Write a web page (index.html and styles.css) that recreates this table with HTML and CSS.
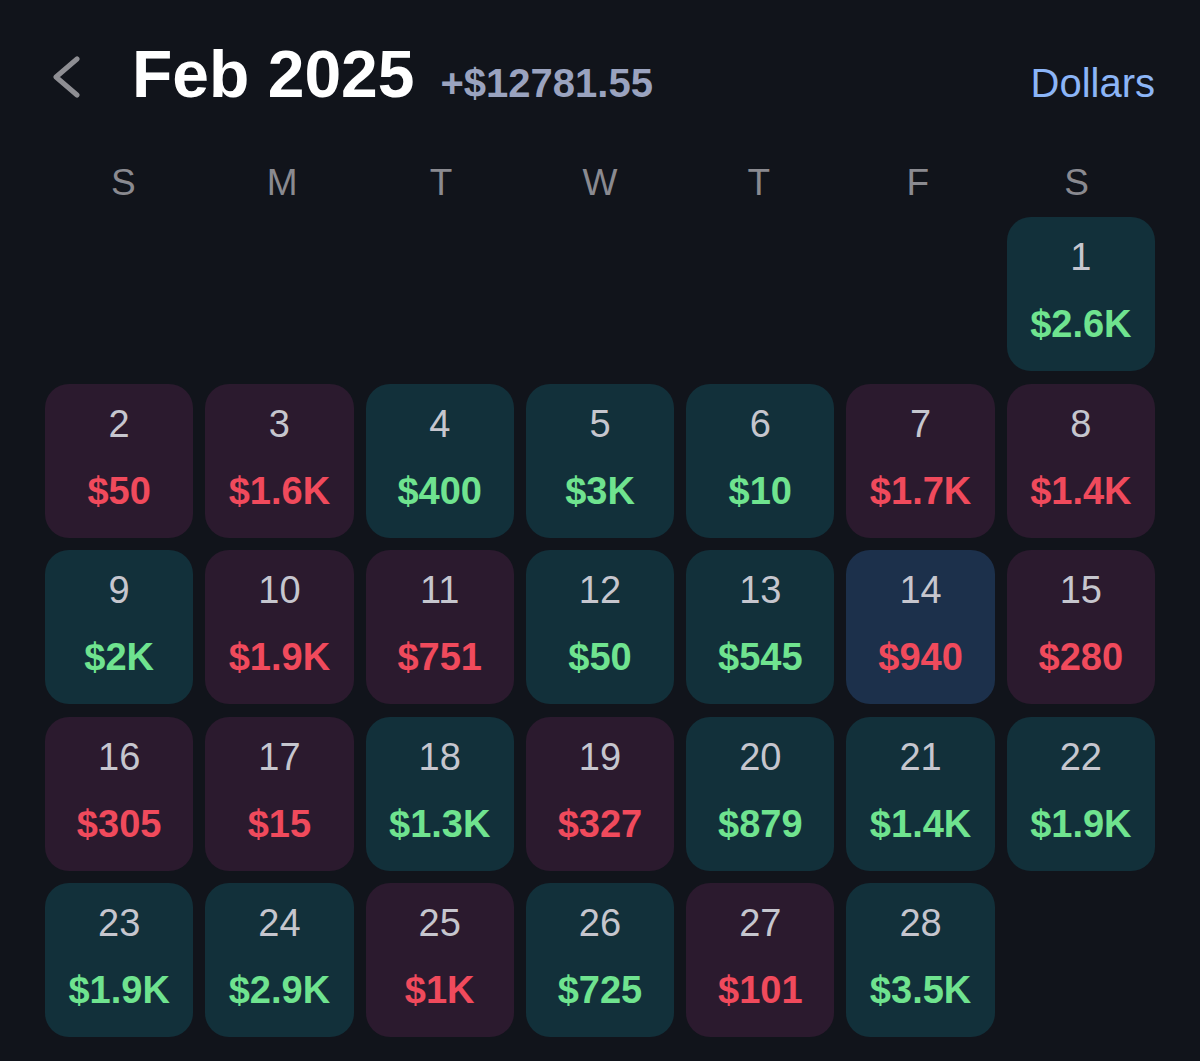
FILE: index.html
```html
<!DOCTYPE html>
<html lang="en">
<head>
<meta charset="utf-8">
<title>Feb 2025</title>
<link rel="stylesheet" href="styles.css">
</head>
<body>
<div class="screen">
  <header class="header">
    <svg class="back" width="32" height="42" viewBox="0 0 32 42" aria-hidden="true">
      <polyline points="26,3 5,21 26,39" fill="none" stroke="#8e8e93" stroke-width="5" stroke-linecap="round" stroke-linejoin="round"/>
    </svg>
    <h1 class="title">Feb 2025</h1>
    <span class="total">+$12781.55</span>
    <span class="unit">Dollars</span>
  </header>

  <div class="weekdays">
    <span>S</span><span>M</span><span>T</span><span>W</span><span>T</span><span>F</span><span>S</span>
  </div>

  <div class="grid">
    <div class="empty"></div><div class="empty"></div><div class="empty"></div><div class="empty"></div><div class="empty"></div><div class="empty"></div>
    <div class="day up"><span class="num">1</span><span class="amt">$2.6K</span></div>

    <div class="day down"><span class="num">2</span><span class="amt">$50</span></div>
    <div class="day down"><span class="num">3</span><span class="amt">$1.6K</span></div>
    <div class="day up"><span class="num">4</span><span class="amt">$400</span></div>
    <div class="day up"><span class="num">5</span><span class="amt">$3K</span></div>
    <div class="day up"><span class="num">6</span><span class="amt">$10</span></div>
    <div class="day down"><span class="num">7</span><span class="amt">$1.7K</span></div>
    <div class="day down"><span class="num">8</span><span class="amt">$1.4K</span></div>

    <div class="day up"><span class="num">9</span><span class="amt">$2K</span></div>
    <div class="day down"><span class="num">10</span><span class="amt">$1.9K</span></div>
    <div class="day down"><span class="num">11</span><span class="amt">$751</span></div>
    <div class="day up"><span class="num">12</span><span class="amt">$50</span></div>
    <div class="day up"><span class="num">13</span><span class="amt">$545</span></div>
    <div class="day today down-text"><span class="num">14</span><span class="amt">$940</span></div>
    <div class="day down"><span class="num">15</span><span class="amt">$280</span></div>

    <div class="day down"><span class="num">16</span><span class="amt">$305</span></div>
    <div class="day down"><span class="num">17</span><span class="amt">$15</span></div>
    <div class="day up"><span class="num">18</span><span class="amt">$1.3K</span></div>
    <div class="day down"><span class="num">19</span><span class="amt">$327</span></div>
    <div class="day up"><span class="num">20</span><span class="amt">$879</span></div>
    <div class="day up"><span class="num">21</span><span class="amt">$1.4K</span></div>
    <div class="day up"><span class="num">22</span><span class="amt">$1.9K</span></div>

    <div class="day up"><span class="num">23</span><span class="amt">$1.9K</span></div>
    <div class="day up"><span class="num">24</span><span class="amt">$2.9K</span></div>
    <div class="day down"><span class="num">25</span><span class="amt">$1K</span></div>
    <div class="day up"><span class="num">26</span><span class="amt">$725</span></div>
    <div class="day down"><span class="num">27</span><span class="amt">$101</span></div>
    <div class="day up"><span class="num">28</span><span class="amt">$3.5K</span></div>
    <div class="empty"></div>
  </div>
</div>
</body>
</html>
```

FILE: styles.css
```css
html, body {
  margin: 0;
  padding: 0;
  background: #11141b;
}

body {
  font-family: "Liberation Sans", Arial, sans-serif;
  color: #ffffff;
  width: 1200px;
  height: 1061px;
  overflow: hidden;
}

.screen {
  padding: 0 45px;
}

.header {
  display: flex;
  align-items: baseline;
  padding-top: 41px;
  height: 67px;
}

.back {
  align-self: center;
  margin-left: 6px;
  position: relative;
  top: 2px;
}

.title {
  margin: 0 0 0 49px;
  font-size: 66px;
  line-height: 1;
  font-weight: 700;
  color: #ffffff;
}

.total {
  margin-left: 26px;
  font-size: 40px;
  line-height: 1;
  font-weight: 700;
  color: #9aa3bf;
}

.unit {
  margin-left: auto;
  font-size: 40px;
  line-height: 1;
  color: #8cb5f7;
}

.weekdays {
  display: grid;
  grid-template-columns: repeat(7, 1fr);
  column-gap: 10px;
  padding: 0 4px;
  margin-top: 56px;
  height: 37px;
  font-size: 37px;
  line-height: 1;
  color: #8a8a90;
  text-align: center;
}

.grid {
  display: grid;
  grid-template-columns: repeat(7, 1fr);
  grid-auto-rows: 154px;
  column-gap: 12px;
  row-gap: 12.5px;
  margin-top: 16px;
}

.day {
  display: flex;
  flex-direction: column;
  align-items: center;
  border-radius: 24px;
  padding-top: 21px;
  box-sizing: border-box;
}

.day.up { background: #12303a; }
.day.down { background: #2b1a2e; }
.day.today { background: #1c304b; }

.num {
  font-size: 38px;
  line-height: 1;
  color: #c6c6ce;
}

.amt {
  margin-top: 29px;
  font-size: 38px;
  line-height: 1;
  font-weight: 700;
}

.up .amt { color: #6fe38f; }
.down .amt, .down-text .amt { color: #f04a5c; }
```
